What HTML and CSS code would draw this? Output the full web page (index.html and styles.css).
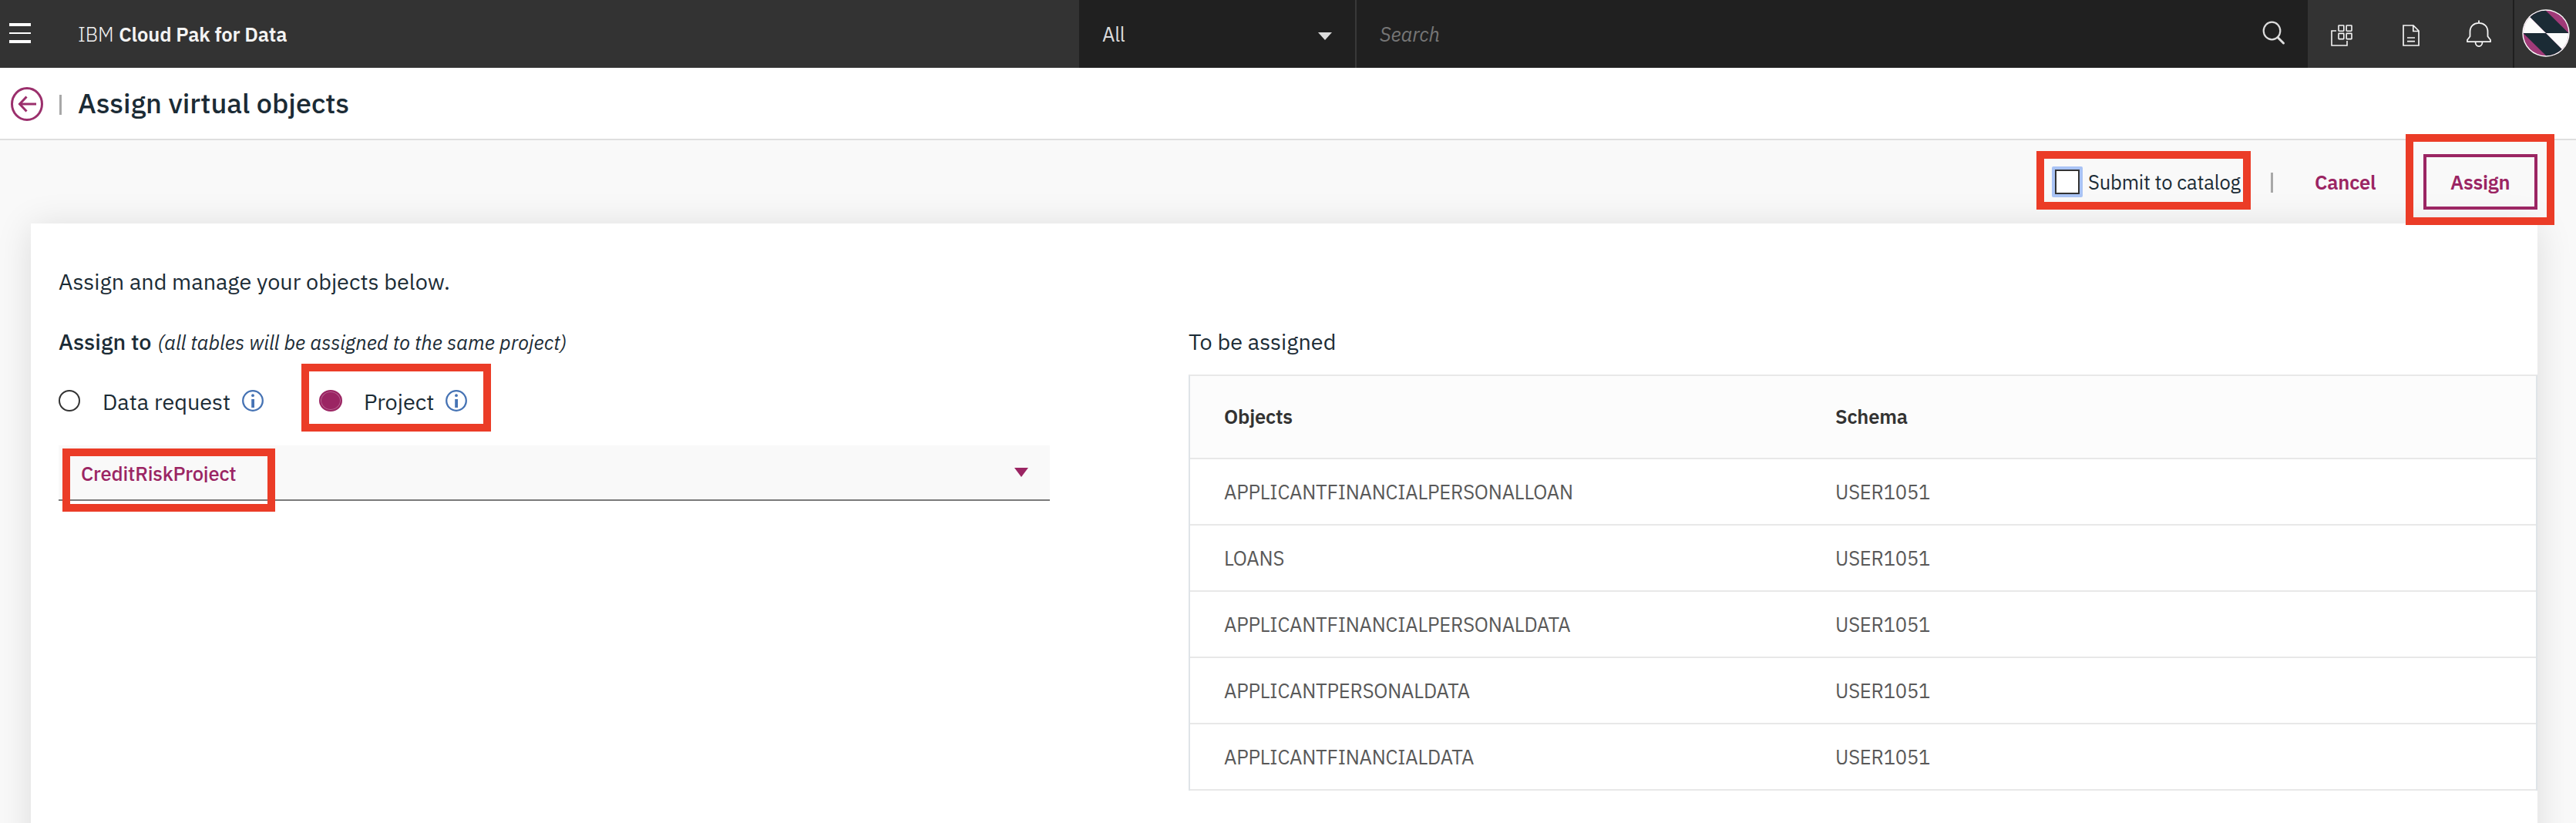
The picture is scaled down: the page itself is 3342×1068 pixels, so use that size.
FILE: index.html
```html
<!DOCTYPE html>
<html lang="en">
<head>
<meta charset="utf-8">
<title>Assign virtual objects</title>
<link rel="stylesheet" href="styles.css">
</head>
<body>
<header class="topbar">
  <div class="brand">
    <div class="menu"><i></i><i class="thin"></i><i></i></div>
    <div class="product"><span class="ibm">IBM</span><span class="name">Cloud Pak for Data</span></div>
  </div>
  <div class="search">
    <div class="scope"><span class="all">All</span>
      <svg class="caret" width="18" height="10" viewBox="0 0 18 10"><path d="M0 0h18L9 10z" fill="#dcdcdc"/></svg>
    </div>
    <div class="query"><span class="placeholder">Search</span>
      <svg class="magnifier" width="30" height="32" viewBox="0 0 30 32" fill="none" stroke="#dcdcdc"><ellipse cx="12.5" cy="13" rx="10.8" ry="11.4" stroke-width="2.2"/><path d="M20 21.500l7.500 7.500" stroke-width="3" stroke-linecap="round"/></svg>
    </div>
  </div>
  <div class="tools">
    <svg width="28" height="28" viewBox="0 0 28 28" fill="none" stroke="#f4f4f4" stroke-width="1.6"><rect x="10" y="1" width="6.800" height="7.200" rx=".6"/><rect x="20.200" y="1" width="6.800" height="7.200" rx=".6"/><rect x="10" y="11.400" width="6.800" height="7.200" rx=".6"/><rect x="20.200" y="11.400" width="6.800" height="7.200" rx=".6"/><path d="M7 8H1v19h20v-6"/></svg>
    <svg class="doc" width="22" height="28" viewBox="0 0 22 28" fill="none" stroke="#f4f4f4" stroke-width="1.700"><path d="M1 1h13l7 7v19H1zM13.800 1v7.500H21M6 17h10M6 21.700h10"/></svg>
    <svg class="bell" width="32" height="36" viewBox="0 0 32 36" fill="none" stroke="#f4f4f4" stroke-width="1.800" stroke-linejoin="round"><path d="M16 .5V4M1 28.200v-2.400l3.500-4.600v-6C4.500 8 9.500 3.800 16 3.800S27.500 8 27.500 15.200v6l3.500 4.600v2.400z"/><path d="M11.500 28.500c0 7.500 9 7.500 9 0"/></svg>
  </div>
  <div class="user">
    <svg width="62" height="62" viewBox="0 0 62 62"><defs><clipPath id="disc"><circle cx="31" cy="31" r="29.300"/></clipPath></defs><circle cx="31" cy="31" r="30.700" fill="#fcfcfc"/><g clip-path="url(#disc)"><path d="M0 0h62v62H0z" fill="#a03a78"/><path d="M0 0h29l31.500 31H31z" fill="#1b2b35"/><path d="M1.500 31H31l31 31H33z" fill="#1b2b35"/><path d="M0 0v31h31z" fill="#fcfcfc"/><path d="M31 31h31v31z" fill="#fcfcfc"/></g></svg>
  </div>
</header>

<div class="titlebar">
  <svg class="back" width="42" height="44" viewBox="0 0 42 44" fill="none" stroke="#9b2f6c" stroke-width="3"><ellipse cx="21" cy="22" rx="19.500" ry="20.500"/><path d="M20.500 12.500L11.500 22l9 9.500M11.500 22H33"/></svg>
  <i class="bar"></i>
  <h1>Assign virtual objects</h1>
</div>

<div class="actions">
  <label class="submit"><i class="check"></i><span>Submit to catalog</span></label>
  <i class="bar"></i>
  <a class="cancel"><span>Cancel</span></a>
  <button class="assign"><span>Assign</span></button>
</div>

<main class="card">
  <p class="intro">Assign and manage your objects below.</p>
  <section class="target">
    <p class="line"><b class="assign-to">Assign to</b><em class="note">(all tables will be assigned to the same project)</em></p>
    <div class="radios">
      <i class="radio"></i><span class="data-request">Data request</span>
      <svg class="info" width="28" height="28" viewBox="0 0 28 28"><circle cx="14" cy="14" r="12.800" fill="none" stroke="#4673b4" stroke-width="2.300"/><circle cx="14" cy="7.200" r="1.900" fill="#4673b4"/><path d="M12.200 12h3.800v11h-3.800z" fill="#4673b4"/></svg>
      <i class="radio on"></i><span class="project">Project</span>
      <svg class="info" width="28" height="28" viewBox="0 0 28 28"><circle cx="14" cy="14" r="12.800" fill="none" stroke="#4673b4" stroke-width="2.300"/><circle cx="14" cy="7.200" r="1.900" fill="#4673b4"/><path d="M12.200 12h3.800v11h-3.800z" fill="#4673b4"/></svg>
    </div>
    <div class="select"><span class="value">CreditRiskProject</span>
      <svg width="18" height="12" viewBox="0 0 18 12"><path d="M0 0h18L9 12z" fill="#9b2563"/></svg>
    </div>
  </section>
  <section class="assigned">
    <p class="line">To be assigned</p>
    <div class="table">
      <div class="row head"><span>Objects</span><span>Schema</span></div>
      <div class="row"><span>APPLICANTFINANCIALPERSONALLOAN</span><span>USER1051</span></div>
      <div class="row"><span>LOANS</span><span>USER1051</span></div>
      <div class="row"><span>APPLICANTFINANCIALPERSONALDATA</span><span>USER1051</span></div>
      <div class="row"><span>APPLICANTPERSONALDATA</span><span>USER1051</span></div>
      <div class="row"><span>APPLICANTFINANCIALDATA</span><span>USER1051</span></div>
    </div>
  </section>
</main>

<div class="mark mark-submit"></div>
<div class="mark mark-assign"></div>
<div class="mark mark-project"></div>
<div class="mark mark-value"></div>
</body>
</html>
```
FILE: styles.css
```css
* { box-sizing: border-box; }
body { margin: 0; height: 1068px; overflow: hidden; background: #f9f9f9; color: #1b2b35; font-family: "IBM Plex Sans", Roboto, sans-serif; font-size: 25.6px; letter-spacing: -.2px; line-height: 39px; }
p, h1 { margin: 0; }
svg { display: block; flex: none; }
i { display: block; flex: none; }
span, b, em { white-space: nowrap; }

.topbar { display: flex; height: 88px; background: #333; color: #f4f4f4; }
.brand { display: flex; width: 1400px; padding: 30px 0 0 12px; gap: 61px; align-items: flex-start; }
.menu { display: flex; flex-direction: column; gap: 8px; width: 28px; }
.menu i { height: 4px; background: #fff; }
.menu .thin { height: 2px; }
.product { display: flex; gap: 7px; margin-top: -5px; }
.ibm { font-weight: 300; }
.name { font-weight: 600; letter-spacing: -.15px; }
.search { display: flex; width: 1594px; background: #202020; }
.scope { display: flex; align-items: center; justify-content: space-between; width: 360px; padding: 1px 30px 0 30px; border-right: 2px solid #383838; }
.caret { margin-top: 5px; }
.all { color: #dcdcdc; }
.query { display: flex; flex: 1; align-items: center; justify-content: space-between; padding: 1px 29px 0 30px; }
.placeholder { color: #767676; font-style: italic; }
.magnifier { margin-top: -3px; }
.tools { display: flex; align-items: center; width: 268px; padding: 4px 0 0 30px; border-right: 2px solid #1f1f1f; }
.doc { margin-left: 65px; }
.bell { margin: -4px 0 0 61px; }
.user { padding: 12px 0 0 10px; }

.titlebar { display: flex; align-items: center; height: 94px; padding: 2px 0 0 14px; border-bottom: 2px solid #dfdfdf; background: #fff; }
.bar { width: 3px; height: 26px; background: #a8a8a8; }
.titlebar .bar { margin: 2px 21px 0 21px; }
h1 { margin-top: -3px; font-size: 36px; font-weight: 500; letter-spacing: 0; line-height: 45px; }

.actions { display: flex; align-items: center; height: 108px; padding: 0 50px 0 2662px; }
.submit { display: flex; align-items: center; gap: 7px; width: 284px; }
.check { width: 40px; height: 40px; border: 4px solid #a9c3f5; border-radius: 2px; background: #fff; box-shadow: inset 0 0 0 2px #333; }
.actions .bar { margin-top: 2px; }
.actions span { position: relative; top: .5px; }
.cancel { margin-left: 54px; width: 141px; color: #9b2563; font-weight: 600; }
.assign { width: 148px; height: 72px; padding: 0 0 0 31px; border: 4px solid #9b2563; background: transparent; color: #9b2563; font: inherit; font-weight: 600; letter-spacing: inherit; text-align: left; }

.card { display: grid; grid-template-columns: 1286px 1750px; grid-template-rows: 40px 1fr; column-gap: 180px; row-gap: 38px; height: 820px; margin: 0 50px 0 40px; padding: 55px 0 0 36px; background: #fff; box-shadow: 0 4px 44px rgba(0, 0, 0, .12); font-size: 28.8px; letter-spacing: 0; line-height: 40px; }
.intro { grid-column: 1 / 3; }
.line { display: flex; align-items: baseline; gap: 8px; height: 40px; }
.assign-to { font-weight: 500; }
.note { font-size: 25.7px; }
.radios { display: flex; align-items: center; height: 40px; margin-top: 37px; }
.radio { width: 28px; height: 28px; border: 2px solid #333; border-radius: 50%; }
.radio.on { width: 30px; margin-left: 72px; border: 2px solid #9b2563; background: #9b2563; box-shadow: inset 0 0 0 1px #b96592; }
.radios span { position: relative; top: 1px; }
.data-request { margin-left: 29px; width: 181px; }
.project { margin-left: 28px; width: 106px; }
.select { display: flex; align-items: center; justify-content: space-between; height: 72px; margin-top: 38px; padding: 0 28px 0 29px; border-bottom: 2px solid #7a7a7a; background: #f9f9f9; color: #9b2563; font-size: 25.6px; letter-spacing: -.2px; }
.value { height: 27px; margin-top: -1px; overflow: hidden; line-height: 31px; font-weight: 500; }
.table { margin-top: 23px; border: 2px solid #e8e8e8; border-left-color: #dfe4e8; border-right-color: #dfe4e8; border-bottom: 0; font-size: 25.6px; letter-spacing: -.22px; line-height: 39px; }
.row { display: grid; grid-template-columns: 793px 1fr; align-items: start; height: 86px; padding: 23px 0 0 44px; border-bottom: 2px solid #e8e8e8; color: #595959; }
.head { height: 108px; padding-top: 33px; background: #fcfcfc; color: #333; font-weight: 600; }

/* callout frames over the page */
.mark { position: absolute; border: 10px solid #eb3c27; }
.mark-submit { left: 2642px; top: 196px; width: 278px; height: 76px; }
.mark-assign { left: 3121px; top: 174px; width: 193px; height: 118px; }
.mark-project { left: 391px; top: 472px; width: 246px; height: 88px; }
.mark-value { left: 81px; top: 582px; width: 276px; height: 82px; }
```
